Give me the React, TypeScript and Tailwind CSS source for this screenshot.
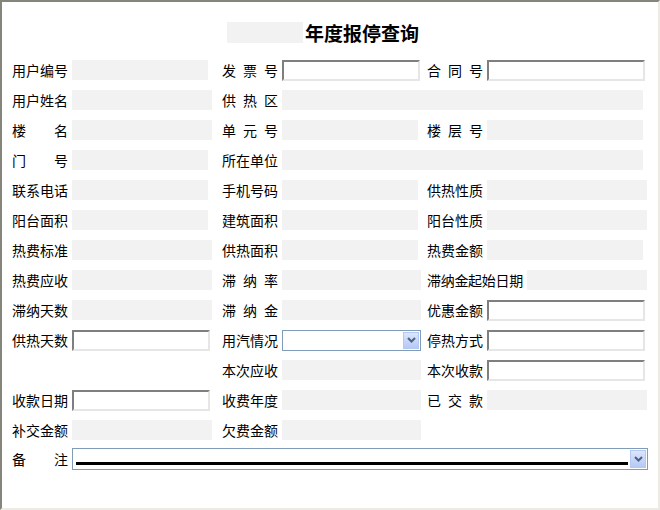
import React from "react";

type Kind = "ro" | "in" | "sel";
type Cell = { label: string; kind?: Kind; w?: number; spread?: boolean; wide?: boolean } | null;

const rows: Cell[][] = [
  [{ label: "用户编号", kind: "ro", w: 136 }, { label: "发票号", kind: "in", w: 138, spread: true }, { label: "合同号", kind: "in", w: 158, spread: true }],
  [{ label: "用户姓名", kind: "ro", w: 140 }, { label: "供热区", kind: "ro", w: 361, spread: true, wide: true }],
  [{ label: "楼名", kind: "ro", w: 140, spread: true }, { label: "单元号", kind: "ro", w: 136, spread: true }, { label: "楼层号", kind: "ro", w: 156, spread: true }],
  [{ label: "门号", kind: "ro", w: 136, spread: true }, { label: "所在单位", kind: "ro", w: 361, wide: true }],
  [{ label: "联系电话", kind: "ro", w: 136 }, { label: "手机号码", kind: "ro", w: 136 }, { label: "供热性质", kind: "ro", w: 160 }],
  [{ label: "阳台面积", kind: "ro", w: 136 }, { label: "建筑面积", kind: "ro", w: 136 }, { label: "阳台性质", kind: "ro", w: 160 }],
  [{ label: "热费标准", kind: "ro", w: 140 }, { label: "供热面积", kind: "ro", w: 136 }, { label: "热费金额", kind: "ro", w: 156 }],
  [{ label: "热费应收", kind: "ro", w: 140 }, { label: "滞纳率", kind: "ro", w: 139, spread: true }, { label: "滞纳金起始日期", kind: "ro", w: 120 }],
  [{ label: "滞纳天数", kind: "ro", w: 140 }, { label: "滞纳金", kind: "ro", w: 139, spread: true }, { label: "优惠金额", kind: "in", w: 158 }],
  [{ label: "供热天数", kind: "in", w: 138 }, { label: "用汽情况", kind: "sel", w: 139 }, { label: "停热方式", kind: "in", w: 158 }],
  [null, { label: "本次应收", kind: "ro", w: 139 }, { label: "本次收款", kind: "in", w: 158 }],
  [{ label: "收款日期", kind: "in", w: 138 }, { label: "收费年度", kind: "ro", w: 139 }, { label: "已交款", kind: "ro", w: 160, spread: true }],
  [{ label: "补交金额", kind: "ro", w: 140 }, { label: "欠费金额", kind: "ro", w: 139 }, null],
];

function DropBtn() {
  return (
    <div className="w-[16px] h-full border border-[#b5c8f2] bg-gradient-to-b from-[#dce6fc] to-[#b4c9f4] flex items-center justify-center">
      <svg width="9" height="6" viewBox="0 0 9 6">
        <path d="M1 1 L4.5 4.5 L8 1" fill="none" stroke="#4d6185" strokeWidth="2" />
      </svg>
    </div>
  );
}

function Box({ kind, w }: { kind: Kind; w: number }) {
  if (kind === "ro") return <div className="h-[20px] bg-[#f2f2f2]" style={{ width: w }} />;
  if (kind === "in")
    return (
      <div
        className="h-[21px] bg-white border-2 border-t-[#7f7f7f] border-l-[#7f7f7f] border-b-[#e6e6e6] border-r-[#e6e6e6]"
        style={{ width: w }}
      />
    );
  return (
    <div className="h-[21px] bg-white border border-[#7f9db9] flex justify-end p-px" style={{ width: w }}>
      <DropBtn />
    </div>
  );
}

function Label({ text, spread }: { text: string; spread?: boolean }) {
  return (
    <span className={`flex w-[56px] shrink-0 whitespace-nowrap ${spread ? "justify-between" : ""}`}>
      {text.split("").map((c, i) => (
        <span key={i}>{c}</span>
      ))}
    </span>
  );
}

function FieldCell({ cell, width }: { cell: Cell; width?: number }) {
  if (!cell) return <div style={{ width }} className="shrink-0" />;
  const longLabel = cell.label.length > 4;
  return (
    <div className="flex items-center shrink-0" style={{ width: cell.wide ? undefined : width }}>
      {longLabel ? (
        <span className="w-[100px] shrink-0 whitespace-nowrap tracking-[-0.3px]">{cell.label}</span>
      ) : (
        <span className="w-[60px] shrink-0">
          <Label text={cell.label} spread={cell.spread} />
        </span>
      )}
      <Box kind={cell.kind!} w={cell.w!} />
    </div>
  );
}

export default function App() {
  return (
    <div
      className="w-[660px] h-[510px] bg-white text-black text-[14px] leading-none border-t-2 border-l-2 border-[#85857b] border-r-2 border-b-2 border-r-[#ecebe4] border-b-[#ecebe4] overflow-hidden"
      style={{ fontFamily: '"Noto Sans CJK SC", "Noto Sans", sans-serif' }}
    >
      {/* Title */}
      <div className="pt-[20px] h-[53px] flex items-start pl-[225px]">
        <div className="w-[76px] h-[21px] bg-[#f2f2f2]" />
        <h1 className="ml-[2px] text-[19px] font-bold leading-[21px]">年度报停查询</h1>
      </div>

      {/* Fields */}
      <div className="pl-[10px]">
        {rows.map((r, i) => (
          <div key={i} className="h-[30px] flex items-center">
            <FieldCell cell={r[0]} width={210} />
            <FieldCell cell={r[1]} width={205} />
            {r[2] !== undefined && <FieldCell cell={r[2]} width={220} />}
          </div>
        ))}
        <div className="h-[28px] flex items-center">
          <span className="w-[60px] shrink-0">
            <Label text="备注" spread />
          </span>
          <div className="w-[576px] h-[22px] bg-white border border-[#7f9db9] flex items-stretch p-px">
            <div className="flex-1 flex items-end pb-[3px] pl-[2px] pr-[2px]">
              <div className="w-full h-[3px] bg-black" />
            </div>
            <DropBtn />
          </div>
        </div>
      </div>
    </div>
  );
}
